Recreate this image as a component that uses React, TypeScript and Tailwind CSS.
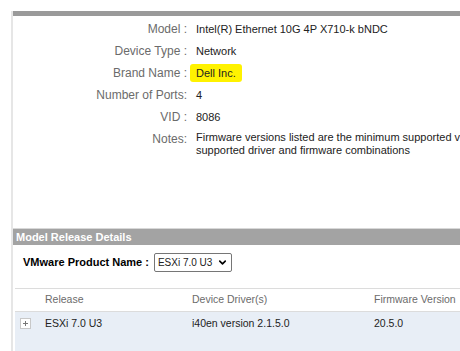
import { ChevronDown } from "lucide-react";

const rows: { label: string; value: string; mark?: boolean }[] = [
  { label: "Model :", value: "Intel(R) Ethernet 10G 4P X710-k bNDC" },
  { label: "Device Type :", value: "Network" },
  { label: "Brand Name :", value: "Dell Inc.", mark: true },
  { label: "Number of Ports:", value: "4" },
  { label: "VID :", value: "8086" },
];

export default function App() {
  return (
    <div className="w-[460px] h-[351px] overflow-hidden bg-white pt-[11px] pl-[11px] font-['Liberation_Sans',Arial,sans-serif]">
      {/* device details */}
      <div className="w-[600px] border-l-2 border-[#e6e6e6]">
        <div className="h-[5px] bg-[#9a9a9a]" />
        <div className="h-[212px] pt-[2px]">
          {rows.map((r) => (
            <div key={r.label} className="flex h-[22px] items-center">
              <div className="w-[174px] shrink-0 text-right text-[12px] text-[#6b6b6b]">{r.label}</div>
              <div className="pl-[9px] text-[11px] text-[#222]">
                {r.mark ? (
                  <span className="-ml-[6px] rounded-[3px] bg-[#fff200] px-[6px] py-[3px]">{r.value}</span>
                ) : (
                  r.value
                )}
              </div>
            </div>
          ))}
          <div className="flex">
            <div className="w-[174px] shrink-0 text-right text-[12px] leading-[22px] text-[#6b6b6b]">Notes:</div>
            <div className="whitespace-nowrap pl-[9px] pt-[3px] text-[11px] leading-[13px] text-[#222]">
              Firmware versions listed are the minimum supported versions. Please refer to the vendor for
              <br />
              supported driver and firmware combinations
            </div>
          </div>
        </div>
      </div>

      {/* release details */}
      <div className="w-[600px] border-l-2 border-[#e6e6e6]">
        <div className="h-[17px] border-t border-[#d8d8d8] bg-[#a3a3a3] pl-[3px] text-[11px] font-bold leading-[16px] text-white">
          Model Release Details
        </div>
        <div className="flex h-[43px] items-start gap-[5px] pl-[10px] pt-[8px]">
          <span className="text-[11px] font-bold leading-[19px] text-black">VMware Product Name :</span>
          <div className="flex h-[19px] w-[78px] items-center justify-between rounded-[2px] border border-[#767676] px-[3px] text-[10px] text-[#222]">
            <span>ESXi 7.0 U3</span>
            <ChevronDown size={11} strokeWidth={3.5} className="text-black" />
          </div>
        </div>
        <div className="ml-[2px] border-t border-[#dcdcdc]">
          <div className="flex h-[22px] items-center text-[10.5px] text-[#6b6b6b]">
            <div className="w-[30px]" />
            <div className="w-[147px]">Release</div>
            <div className="w-[182px]">Device Driver(s)</div>
            <div>Firmware Version</div>
          </div>
          <div className="flex h-[60px] items-start border-t border-[#dcdcdc] bg-[#e8eef6] pt-[5px] text-[10.5px] leading-[12px] text-[#222]">
            <div className="w-[30px] pl-[5px] pt-[1px]">
              <div className="relative h-[11px] w-[11px] border border-[#c8c8c8] bg-white">
                <div className="absolute left-[2px] top-[4px] h-px w-[5px] bg-[#777]" />
                <div className="absolute left-[4px] top-[2px] h-[5px] w-px bg-[#777]" />
              </div>
            </div>
            <div className="w-[147px]">ESXi 7.0 U3</div>
            <div className="w-[182px]">i40en version 2.1.5.0</div>
            <div>20.5.0</div>
          </div>
        </div>
      </div>
    </div>
  );
}
